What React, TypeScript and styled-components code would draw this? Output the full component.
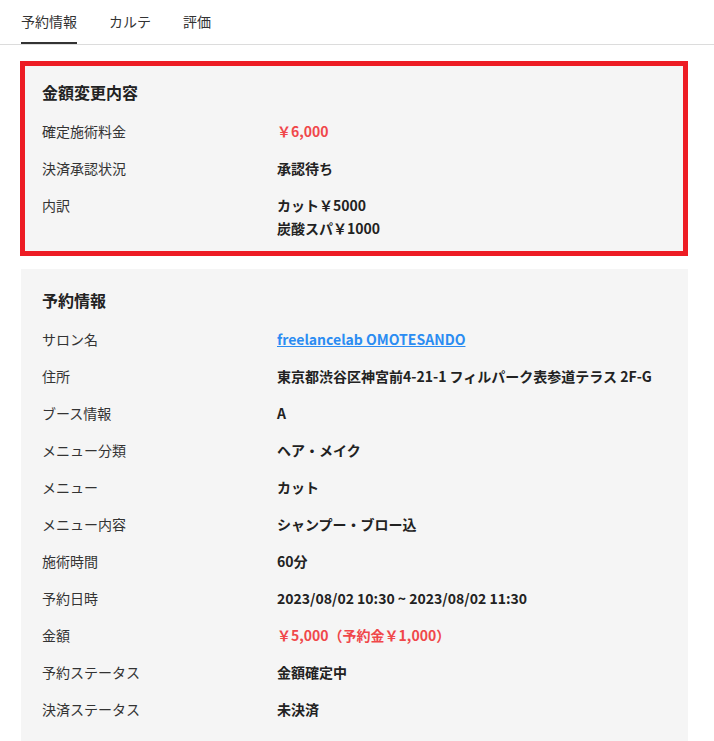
import React from 'react';
import styled, {createGlobalStyle} from 'styled-components';

const GlobalStyle = createGlobalStyle`
  body {
    margin: 0;
    background: #fff;
    font-family: "Noto Sans CJK JP", "Noto Sans", sans-serif;
    color: #333;
  }
`;

const Page = styled.div`
  width: 714px;
`;

const Tabs = styled.nav`
  display: flex;
  gap: 32px;
  height: 44px;
  padding-left: 21px;
  border-bottom: 1px solid #dcdcdc;
`;

const Tab = styled.div<{ $active?: boolean }>`
  display: flex;
  align-items: center;
  height: 44px;
  box-sizing: border-box;
  padding-top: 1px;
  font-size: 14px;
  color: #333;
  border-bottom: 2px solid ${p => (p.$active ? '#333' : 'transparent')};
  margin-bottom: -1px;
  padding-bottom: 1px;
`;

const Content = styled.main`
  display: flex;
  flex-direction: column;
  gap: 13px;
  padding: 16px 26px 0 20px;
`;

const Card = styled.section<{ $highlight?: boolean }>`
  display: flex;
  flex-direction: column;
  gap: 14px;
  background: #f5f5f5;
  padding: ${p => (p.$highlight ? '19px 22px 16px' : '19px 21px 20px')};
  margin-left: ${p => (p.$highlight ? '0' : '1px')};
  box-shadow: ${p => (p.$highlight ? 'inset 0 0 0 5px #ed1c24' : 'none')};
`;

const CardTitle = styled.h2`
  margin: 0 0 2px;
  font-size: 16px;
  line-height: 24px;
  font-weight: 700;
  color: #222;
`;

const Row = styled.div`
  display: grid;
  grid-template-columns: 235px 1fr;
  font-size: 14px;
  line-height: 23px;
`;

const Label = styled.div`
  color: #333;
`;

const Value = styled.div<{ $red?: boolean }>`
  font-weight: 700;
  color: ${p => (p.$red ? '#f0474a' : '#222')};
`;

const Link = styled.a`
  color: #2b8cf2;
  text-decoration: underline;
  font-weight: 700;
`;

type Item = { label: string; value: React.ReactNode; red?: boolean };

const changeItems: Item[] = [
    {label: '確定施術料金', value: '￥6,000', red: true},
    {label: '決済承認状況', value: '承認待ち'},
    {label: '内訳', value: <>カット￥5000<br/>炭酸スパ￥1000</>},
];

const reserveItems: Item[] = [
    {label: 'サロン名', value: <Link href="#">freelancelab OMOTESANDO</Link>},
    {label: '住所', value: '東京都渋谷区神宮前4-21-1 フィルパーク表参道テラス 2F-G'},
    {label: 'ブース情報', value: 'A'},
    {label: 'メニュー分類', value: 'ヘア・メイク'},
    {label: 'メニュー', value: 'カット'},
    {label: 'メニュー内容', value: 'シャンプー・ブロー込'},
    {label: '施術時間', value: '60分'},
    {label: '予約日時', value: '2023/08/02 10:30 ~ 2023/08/02 11:30'},
    {label: '金額', value: '￥5,000（予約金￥1,000）', red: true},
    {label: '予約ステータス', value: '金額確定中'},
    {label: '決済ステータス', value: '未決済'},
];

const InfoCard = ({title, items, highlight}: { title: string; items: Item[]; highlight?: boolean }) => (
    <Card $highlight={highlight}>
        <CardTitle>{title}</CardTitle>
        {items.map(item => (
            <Row key={item.label}>
                <Label>{item.label}</Label>
                <Value $red={item.red}>{item.value}</Value>
            </Row>
        ))}
    </Card>
);

const App = () => {
    return (
        <Page>
            <GlobalStyle/>
            <Tabs>
                <Tab $active>予約情報</Tab>
                <Tab>カルテ</Tab>
                <Tab>評価</Tab>
            </Tabs>
            <Content>
                <InfoCard title="金額変更内容" items={changeItems} highlight/>
                <InfoCard title="予約情報" items={reserveItems}/>
            </Content>
        </Page>
    );
};

export default App;
